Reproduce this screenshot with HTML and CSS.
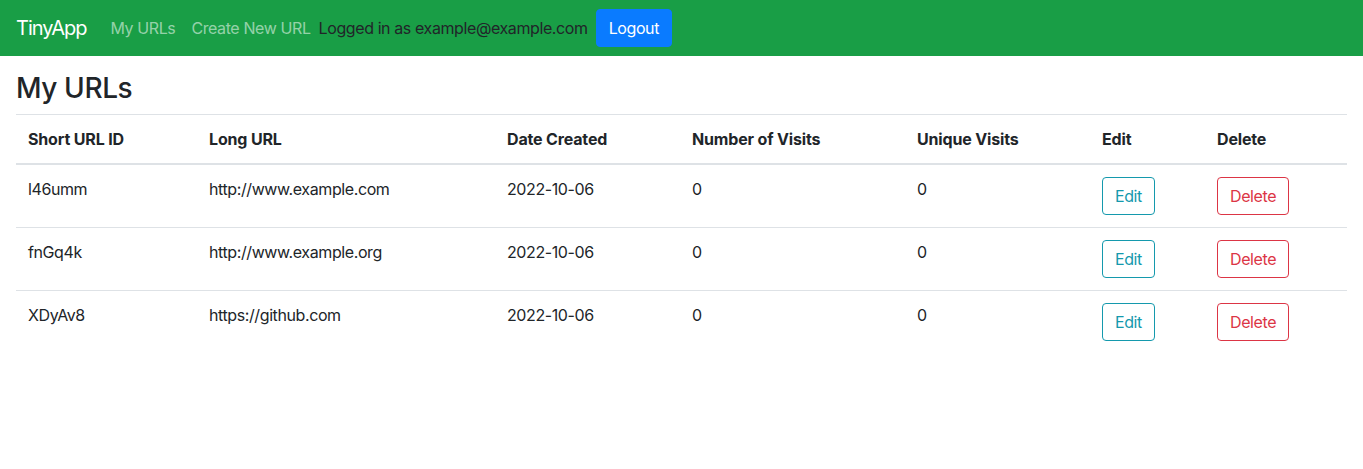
FILE: index.html
```html
<!DOCTYPE html>
<html lang="en">
<head>
<meta charset="utf-8">
<title>TinyApp</title>
<link rel="stylesheet" href="styles.css">
</head>
<body>
<nav class="navbar">
  <a class="brand" href="#">TinyApp</a>
  <ul class="nav-links">
    <li><a class="nav-link" href="#">My URLs</a></li>
    <li><a class="nav-link" href="#">Create New URL</a></li>
  </ul>
  <span class="user">Logged in as example@example.com</span>
  <button class="btn btn-primary">Logout</button>
</nav>
<main class="content">
  <h3 class="title">My URLs</h3>
  <table class="table">
    <thead>
      <tr>
        <th class="c1">Short URL ID</th>
        <th class="c2">Long URL</th>
        <th class="c3">Date Created</th>
        <th class="c4">Number of Visits</th>
        <th class="c5">Unique Visits</th>
        <th class="c6">Edit</th>
        <th class="c7">Delete</th>
      </tr>
    </thead>
    <tbody>
      <tr>
        <td>l46umm</td>
        <td>http://www.example.com</td>
        <td>2022-10-06</td>
        <td>0</td>
        <td>0</td>
        <td><button class="btn btn-outline-info">Edit</button></td>
        <td><button class="btn btn-outline-danger">Delete</button></td>
      </tr>
      <tr>
        <td>fnGq4k</td>
        <td>http://www.example.org</td>
        <td>2022-10-06</td>
        <td>0</td>
        <td>0</td>
        <td><button class="btn btn-outline-info">Edit</button></td>
        <td><button class="btn btn-outline-danger">Delete</button></td>
      </tr>
      <tr>
        <td>XDyAv8</td>
        <td>https://github.com</td>
        <td>2022-10-06</td>
        <td>0</td>
        <td>0</td>
        <td><button class="btn btn-outline-info">Edit</button></td>
        <td><button class="btn btn-outline-danger">Delete</button></td>
      </tr>
    </tbody>
  </table>
</main>
</body>
</html>
```
FILE: styles.css
```css
* { box-sizing: border-box; }
html, body { margin: 0; padding: 0; }
body {
  font-family: Inter, "Liberation Sans", sans-serif;
  font-size: 16px;
  line-height: 1.5;
  letter-spacing: -0.025em;
  color: #212529;
  background: #fff;
}
.navbar {
  display: flex;
  align-items: center;
  height: 56px;
  padding: 8px 16px;
  background: #199e46;
}
.brand {
  font-size: 20px;
  line-height: 30px;
  letter-spacing: -0.05em;
  color: #fff;
  text-decoration: none;
  margin-right: 16px;
}
.nav-links {
  display: flex;
  list-style: none;
  margin: 0;
  padding: 0;
}
.nav-link {
  display: block;
  padding: 8px;
  color: rgba(255,255,255,0.55);
  text-decoration: none;
}
.user {
  color: #212529;
  margin-right: 8px;
}
.btn {
  font-family: inherit;
  font-size: 16px;
  line-height: 24px;
  letter-spacing: inherit;
  padding: 6px 12px;
  border: 1px solid transparent;
  border-radius: 4px;
  background: transparent;
  cursor: pointer;
}
.btn-primary {
  background: #0a7bff;
  border-color: #0a7bff;
  color: #fff;
}
.btn-outline-info {
  color: #1499ad;
  border-color: #1499ad;
}
.btn-outline-danger {
  color: #dc3545;
  border-color: #dc3545;
}
.content {
  padding: 16px 16px 0;
}
.title {
  font-size: 28px;
  font-weight: 500;
  line-height: 1.2;
  margin: 0 0 8px;
}
.table {
  width: 100%;
  border-collapse: collapse;
}
.table th, .table td {
  padding: 12px;
  text-align: left;
  vertical-align: top;
  border-top: 1px solid #dee2e6;
}
.table thead th {
  font-weight: 700;
  letter-spacing: -0.01em;
  border-bottom: 2px solid #dee2e6;
  vertical-align: bottom;
}
.c1 { width: 181px; }
.c2 { width: 298px; }
.c3 { width: 185px; }
.c4 { width: 225px; }
.c5 { width: 185px; }
.c6 { width: 115px; }
.c7 { width: 142px; }
```
